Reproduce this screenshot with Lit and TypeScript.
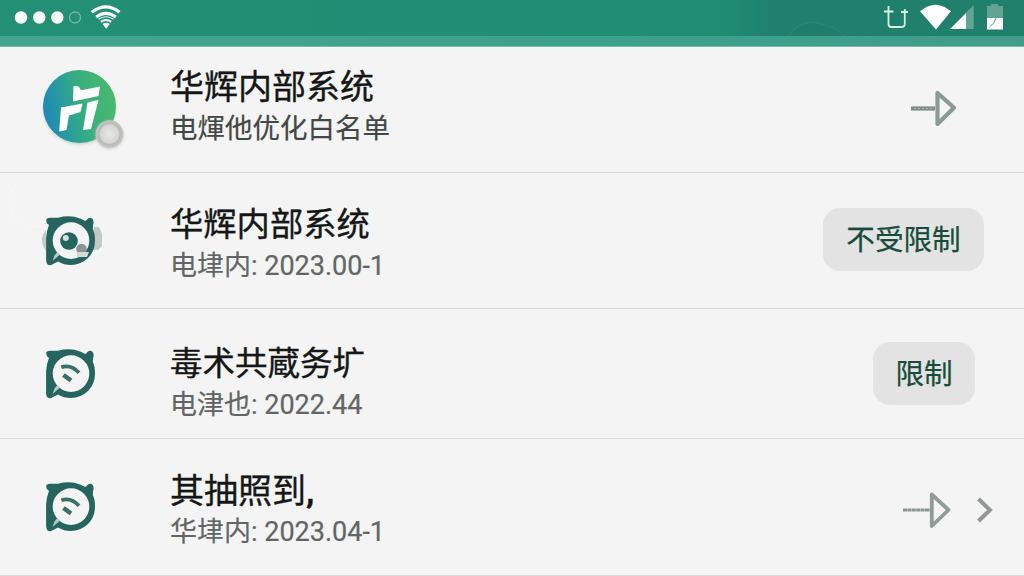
import { LitElement, html, css, svg } from "lit";
import { customElement, property } from "lit/decorators.js";

@customElement("status-bar")
class StatusBar extends LitElement {
  static styles = css`
    :host { display: block; height: 47px; }
    .bar { height: 36px; display: flex; justify-content: space-between; background: linear-gradient(90deg, #238f75, #1f8d74 70%, #1f806d 76%, #20806c); }
    .strip { height: 11px; box-sizing: border-box; background: linear-gradient(90deg, #43a58e, #3da28b 60%, #409c88); border-bottom: 1px solid #7dbcad; }
    svg { display: block; }
  `;
  render() {
    return html`
      <div class="bar">
        <svg width="130" height="36" viewBox="0 0 130 36" fill="#fff">
          <circle cx="21" cy="17.5" r="6.2" /><circle cx="39.3" cy="17.5" r="6.2" /><circle cx="57.3" cy="17.5" r="6.2" />
          <circle cx="75" cy="17.5" r="5.5" fill="none" stroke="#76b9a5" stroke-width="1.3" />
          <g fill="none" stroke="#fff">
            <path d="M91.8 12.2Q106 1.6 119.5 12.2" stroke-width="3.3" />
            <path d="M96.2 17Q106 9.8 115.8 17" stroke-width="3" />
            <path d="M98.5 19.2Q106 14.3 113.5 19.2" stroke-width="1.2" />
            <path d="M100.8 21.8Q106 18.4 111.2 21.8" stroke-width="2" />
          </g>
          <path d="M102.6 24.1Q106 21.6 109.8 24.1L106.2 28.7Z" />
        </svg>
        <svg width="304" height="36" viewBox="720 0 304 36">
          <path d="M789 36Q803 14 833 28Q842 32 844 36" fill="#1f7e6b" stroke="#2b8975" stroke-width="1" />
          <g fill="none" stroke="#d9f0df" stroke-width="1.8">
            <path d="M888.5 6V24Q888.5 27 891.5 27H901Q904.8 27 904.8 24V9" /><path d="M884 11.5H893.5M901 12H908" />
          </g>
          <path d="M920 11.3Q935.5 -1.8 951 11.3L936 29.4Z" fill="#fff" />
          <path d="M973.7 5V29H950Z" fill="#61a592" /><path d="M966 13.2V29H950Z" fill="#fff" />
          <path d="M987 6H991V4H998V6H1003V18H987Z" fill="#62a391" />
          <path d="M987 18H1003V29.5H987Z" fill="#fff" />
          <path d="M996 18Q995 23 989.5 27" stroke="#539483" stroke-width="1" fill="none" />
        </svg>
      </div>
      <div class="strip"></div>
    `;
  }
}

const bubbleFrame = svg`
  <path d="M46.2 220.5Q46.2 217.8 50 217.8H58Q70 214.5 80 218.5L85.5 221L88 218.4Q90.5 216.8 92.6 219Q94.4 221.5 93 225.5L92.8 229Q95 233 95 240.5Q95 251 88 258Q80.5 265 71 265Q64 265 58 261.5L53 264Q50 266.3 47.3 264.3Q45.8 262.5 46.1 257V238Q46.5 231 49 225Q46.2 223.5 46.2 220.5Z" fill="#26645f" />
  <circle cx="71" cy="240.6" r="18.3" fill="#f3f4f3" />
  <path d="M52.5 261L54.5 255.5L57 252.5L60 254.5Z" fill="#b9cbc5" />
`;

@customElement("app-icon")
class AppIcon extends LitElement {
  static styles = css`
    :host { display: block; }
    svg { display: block; overflow: visible; }
  `;
  @property() kind = "logo";

  render() {
    if (this.kind === "logo") {
      return html`<svg width="170" height="125" viewBox="0 47 170 125">
        <defs>
          <linearGradient id="g" x1="0" y1=".6" x2="1" y2=".4">
            <stop offset="0" stop-color="#2186b9" /><stop offset=".28" stop-color="#289c9d" /><stop offset=".55" stop-color="#37ae80" /><stop offset="1" stop-color="#48bb6c" />
          </linearGradient>
          <radialGradient id="b"><stop offset="0" stop-color="#e6e6e6" /><stop offset=".65" stop-color="#d6d6d5" /><stop offset=".76" stop-color="#b9bab8" /><stop offset="1" stop-color="#c6c7c5" /></radialGradient>
          <filter id="s" x="-20%" y="-20%" width="140%" height="140%"><feGaussianBlur stdDeviation="1.5" /></filter>
        </defs>
        <circle cx="79.5" cy="108.5" r="36" fill="#c5d2cf" filter="url(#s)" />
        <circle cx="79.5" cy="106.5" r="36.5" fill="url(#g)" />
        <path d="M73.5 86L78.5 86.2L81 90.3L100 86.5L98.5 96L73 101.5Z" fill="#fff" />
        <path d="M61 107.5L82.5 103.5L80.5 112L69 115.5L66.5 130L59.2 131.5Z" fill="#fff" />
        <path d="M87.5 102.5L98.5 100L91 129L83 130Z" fill="#fff" />
        <circle cx="109.5" cy="135" r="13.8" fill="#c8c8c8" filter="url(#s)" />
        <circle cx="109.5" cy="134" r="13.8" fill="url(#b)" />
      </svg>`;
    }
    if (this.kind === "eye") {
      return html`<svg width="170" height="135" viewBox="0 173 170 135">
        <path d="M18 182Q3 197 14 219Q20 227 46 227" fill="none" stroke="#f7f7f6" stroke-width="1.5" />
        <path d="M46 230Q38 240 46 251Z" fill="#c4cbc9" />
        <path d="M94 227H99L102 234V246L98 250H92Z" fill="#c3c9c6" />
        ${bubbleFrame}
        <circle cx="69" cy="241" r="8.8" fill="#23655f" />
        <circle cx="65.8" cy="238" r="3" fill="#d5dddf" />
        <circle cx="81.5" cy="249" r="5.3" fill="#8b9693" />
        <path d="M77 252H89L87 257H77Z" fill="#d5dad7" />
      </svg>`;
    }
    return html`<svg width="170" height="126" viewBox="0 176 170 126">
      ${bubbleFrame}
      <path d="M61.3 234.3Q71 231 79 239.8" fill="none" stroke="#3b6f69" stroke-width="3.8" />
      <path d="M63.5 242L71 247.5" fill="none" stroke="#3b6f69" stroke-width="4.6" />
    </svg>`;
  }
}

const arrow = html`<svg width="48" height="40" viewBox="0 0 48 40">
  <path d="M1 20.5H25" stroke="#7f8e89" stroke-width="4.2" />
  <path d="M4 20.5H24" stroke="#aab4b0" stroke-width="1" stroke-dasharray="2 2" />
  <path d="M27.5 5V36L44 19.8Z" fill="none" stroke="#8a9a96" stroke-width="4.2" stroke-linejoin="round" />
</svg>`;

const thinArrow = html`<svg width="50" height="40" viewBox="0 0 50 40">
  <path d="M1 20H28" stroke="#8a9491" stroke-width="3.2" stroke-dasharray="4 .4" />
  <path d="M29.8 4.5V36L46.5 20Z" fill="none" stroke="#909b98" stroke-width="3.8" stroke-linejoin="round" />
</svg>`;

@customElement("app-root")
class AppRoot extends LitElement {
  static styles = css`
    :host { display: block; width: 1024px; height: 576px; overflow: hidden; background: #f3f4f3; font-family: Roboto, "Noto Sans CJK SC", sans-serif; }
    .row { display: flex; box-sizing: border-box; border-bottom: 1px solid #d9dad8; }
    .first { height: 126px; }
    .second { height: 136px; }
    .third { height: 130px; }
    .fourth { height: 137px; }
    .icon { flex: none; width: 170px; }
    .fourth .icon { padding-top: 3px; }
    .text { flex: 1; white-space: nowrap; }
    .title { height: 40px; line-height: 40px; font-size: 34px; color: #151716; -webkit-text-stroke: .35px #151716; }
    .sub { height: 36px; line-height: 36px; font-size: 27.5px; color: #434845; -webkit-text-stroke: .2px #434845; }
    .date { color: #616664; font-size: 27px; -webkit-text-stroke-color: #616664; }
    .first .text { padding-top: 20px; }
    .first .sub { padding-top: 4px; }
    .second .text { padding-top: 32px; }
    .second .title { font-size: 33.3px; }
    .second .sub, .fourth .sub { padding-top: 3px; }
    .third .text { padding-top: 35px; }
    .third .title { font-size: 32.5px; }
    .third .sub { padding-top: 3px; }
    .fourth .text { padding-top: 32px; }
    .comma { font-weight: 700; }
    .end { display: flex; align-items: center; color: #174c3c; }
    .first .end { padding: 0 66px 3px 0; }
    .second .end { padding: 0 40px 2px 0; }
    .third .end { padding-right: 49px; }
    .fourth .end { padding: 6px 30px 0 0; gap: 24px; }
    .pill { box-sizing: border-box; height: 63px; line-height: 65px; border-radius: 17px; background: #e2e3e2; font-size: 28.6px; text-align: center; -webkit-text-stroke: .25px #174c3c; }
    .wide { width: 161px; }
    .narrow { width: 102px; }
    svg { display: block; }
  `;
  render() {
    return html`
      <status-bar></status-bar>
      <div class="row first">
        <app-icon class="icon" kind="logo"></app-icon>
        <div class="text"><div class="title">华辉内部系统</div><div class="sub">电煇他优化白名单</div></div>
        <div class="end">${arrow}</div>
      </div>
      <div class="row second">
        <app-icon class="icon" kind="eye"></app-icon>
        <div class="text"><div class="title">华辉内部系统</div><div class="sub date">电垏内: 2023.00-1</div></div>
        <div class="end"><div class="pill wide">不受限制</div></div>
      </div>
      <div class="row third">
        <app-icon class="icon" kind="signal"></app-icon>
        <div class="text"><div class="title">毒术共蔵务圹</div><div class="sub date">电津也: 2022.44</div></div>
        <div class="end"><div class="pill narrow">限制</div></div>
      </div>
      <div class="row fourth">
        <app-icon class="icon" kind="signal"></app-icon>
        <div class="text"><div class="title">其抽照到<span class="comma">,</span></div><div class="sub date">华垏内: 2023.04-1</div></div>
        <div class="end">${thinArrow}
          <svg width="18" height="30" viewBox="0 0 18 30"><path d="M2.5 4L14 15L2.5 26" fill="none" stroke="#929795" stroke-width="4" /></svg>
        </div>
      </div>
    `;
  }
}
